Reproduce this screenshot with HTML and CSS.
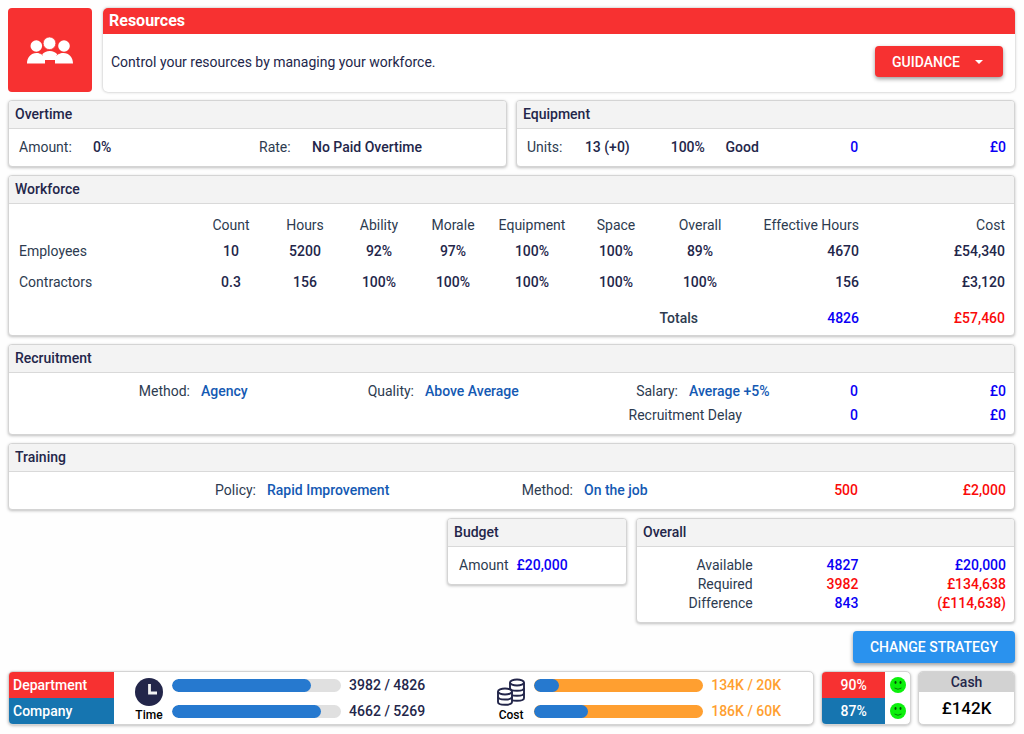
FILE: index.html
```
<!DOCTYPE html>
<html lang="en">
<head>
<meta charset="utf-8">
<meta name="viewport" content="width=device-width, initial-scale=1">
<title>Resources</title>
<link rel="stylesheet" href="styles.css">
</head>
<body>
<main class="page">
  <header class="top">
    <div class="tile">
      <svg class="tile-icon" viewBox="0 0 46 27" aria-hidden="true">
        <g fill="currentColor">
          <circle cx="9.300" cy="9" r="5.800"/>
          <circle cx="37" cy="9" r="5.800"/>
          <path d="M0 26.500C0 20.500 4 16 9.500 16c2.300 0 4 .5 5.500 1.500 2-2 4.500-3.500 7.800-3.500s5.700 1.500 7.700 3.500c1.500-1 3.500-1.500 6-1.500C42 16 46 20.500 46 26.500H28V23H18v3.500z"/>
        </g>
        <circle cx="22.500" cy="6.300" r="6.300" fill="currentColor" stroke="#f73131" stroke-width=".7"/>
        <path d="M12.500 16.200q2 .5 3.500 2.200M33 16.200q-2 .5-3.500 2.200" fill="none" stroke="#f73131" stroke-width=".6"/>
      </svg>
    </div>
    <section class="intro">
      <h1 class="intro-title">Resources</h1>
      <div class="intro-body">
        <p class="intro-text">Control your resources by managing your workforce.</p>
        <button class="btn btn-red" type="button">GUIDANCE <span class="caret"></span></button>
      </div>
    </section>
  </header>

  <div class="pair">
    <section class="panel">
      <h2 class="panel-title">Overtime</h2>
      <div class="row overtime">
        <span>Amount:</span><b>0%</b><span>Rate:</span><b>No Paid Overtime</b>
      </div>
    </section>
    <section class="panel">
      <h2 class="panel-title">Equipment</h2>
      <div class="row equipment">
        <span>Units:</span><b>13 (+0)</b><b>100%</b><b>Good</b><b class="num blue">0</b><b class="num blue">£0</b>
      </div>
    </section>
  </div>

  <section class="panel">
    <h2 class="panel-title">Workforce</h2>
    <table class="workforce">
      <colgroup><col class="c-name"><col class="c-s"><col class="c-s"><col class="c-s"><col class="c-s"><col class="c-m"><col class="c-m"><col class="c-m"><col class="c-hours"><col class="c-cost"></colgroup>
      <thead>
        <tr><td></td><th scope="col">Count</th><th scope="col">Hours</th><th scope="col">Ability</th><th scope="col">Morale</th><th scope="col">Equipment</th><th scope="col">Space</th><th scope="col">Overall</th><th scope="col" class="num">Effective Hours</th><th scope="col" class="num">Cost</th></tr>
      </thead>
      <tbody>
        <tr><th scope="row">Employees</th><td>10</td><td>5200</td><td>92%</td><td>97%</td><td>100%</td><td>100%</td><td>89%</td><td class="num">4670</td><td class="num">£54,340</td></tr>
        <tr class="tall"><th scope="row">Contractors</th><td>0.3</td><td>156</td><td>100%</td><td>100%</td><td>100%</td><td>100%</td><td>100%</td><td class="num">156</td><td class="num">£3,120</td></tr>
      </tbody>
      <tfoot>
        <tr class="tall"><td colspan="7"></td><th scope="row" class="totals">Totals</th><td class="num blue">4826</td><td class="num red">£57,460</td></tr>
      </tfoot>
    </table>
  </section>

  <section class="panel">
    <h2 class="panel-title">Recruitment</h2>
    <div class="row recruitment">
      <span class="num">Method:</span><a class="link" href="#method">Agency</a>
      <span class="num">Quality:</span><a class="link" href="#quality">Above Average</a>
      <span class="num">Salary:</span><a class="link span2" href="#salary">Average +5%</a>
      <b class="num blue">0</b><b class="num blue">£0</b>
      <span class="num delay">Recruitment Delay</span>
      <b class="num blue delay-hours">0</b><b class="num blue">£0</b>
    </div>
  </section>

  <section class="panel">
    <h2 class="panel-title">Training</h2>
    <div class="row training">
      <span class="num">Policy:</span><a class="link" href="#policy">Rapid Improvement</a>
      <span class="num">Method:</span><a class="link" href="#training">On the job</a>
      <b class="num red">500</b><b class="num red">£2,000</b>
    </div>
  </section>

  <div class="summary">
    <section class="panel">
      <h2 class="panel-title">Budget</h2>
      <div class="row budget"><span>Amount</span><b class="blue">£20,000</b></div>
    </section>
    <section class="panel">
      <h2 class="panel-title">Overall</h2>
      <div class="row overall">
        <span class="num">Available</span><b class="num blue">4827</b><b class="num blue">£20,000</b>
        <span class="num">Required</span><b class="num red">3982</b><b class="num red">£134,638</b>
        <span class="num">Difference</span><b class="num blue">843</b><b class="num red">(£114,638)</b>
      </div>
    </section>
  </div>

  <div class="actions"><button class="btn btn-blue" type="button">CHANGE STRATEGY</button></div>

  <footer class="status">
    <section class="card usage">
      <div class="scopes"><div class="bg-red">Department</div><div class="bg-blue">Company</div></div>
      <div class="metric">
        <svg class="icon" viewBox="0 0 28 28" aria-hidden="true"><circle cx="14" cy="14" r="14" fill="#23264a"/><path d="M14.500 6v9H22" fill="none" stroke="#f3f3f3" stroke-width="2.800"/></svg>
        <span>Time</span>
      </div>
      <div class="bars">
        <div class="bar"><div class="fill" style="width:82%"></div></div>
        <div class="bar"><div class="fill" style="width:88%"></div></div>
      </div>
      <div class="figures"><span>3982 / 4826</span><span>4662 / 5269</span></div>
      <div class="metric">
        <svg class="icon" viewBox="0 0 28 28" fill="#fff" stroke="#23264a" stroke-width="1.900" aria-hidden="true">
          <path d="M13 4.500v15.500c0 1.700 3 2.800 7 2.800s7-1.100 7-2.800V4.500"/>
          <path d="M13 10c0 1.700 3 2.800 7 2.800s7-1.100 7-2.800M13 15c0 1.700 3 2.800 7 2.800s7-1.100 7-2.800" fill="none"/>
          <ellipse cx="20" cy="4.500" rx="7" ry="3"/>
          <path d="M1 13.500v10.500c0 1.700 3 2.800 7 2.800s7-1.100 7-2.800V13.500"/>
          <path d="M1 18.700c0 1.700 3 2.800 7 2.800s7-1.100 7-2.800" fill="none"/>
          <ellipse cx="8" cy="13.500" rx="7" ry="3"/>
        </svg>
        <span>Cost</span>
      </div>
      <div class="bars">
        <div class="bar over"><div class="fill" style="width:15%"></div></div>
        <div class="bar over"><div class="fill" style="width:32%"></div></div>
      </div>
      <div class="figures orange"><span>134K / 20K</span><span>186K / 60K</span></div>
    </section>
    <section class="card mood">
      <div class="scopes rates"><div class="bg-red">90%</div><div class="bg-blue">87%</div></div>
      <div class="faces">
        <svg class="face" viewBox="0 0 16 16" aria-hidden="true"><circle cx="8" cy="8" r="8" fill="#0cf00c"/><ellipse cx="5.500" cy="5.500" rx="1" ry="1.400" fill="#064806"/><ellipse cx="10.500" cy="5.500" rx="1" ry="1.400" fill="#064806"/><path d="M4.500 11q3.500 2.500 7 0" fill="none" stroke="#087008" stroke-width=".9"/></svg>
        <svg class="face" viewBox="0 0 16 16" aria-hidden="true"><circle cx="8" cy="8" r="8" fill="#0cf00c"/><ellipse cx="5.500" cy="5.500" rx="1" ry="1.400" fill="#064806"/><ellipse cx="10.500" cy="5.500" rx="1" ry="1.400" fill="#064806"/><path d="M4.500 11q3.500 2.500 7 0" fill="none" stroke="#087008" stroke-width=".9"/></svg>
      </div>
    </section>
    <section class="card cash"><h2 class="cash-title">Cash</h2><div class="cash-value">£142K</div></section>
  </footer>
</main>
</body>
</html>
```
FILE: styles.css
```
* { box-sizing: border-box; }

body {
  margin: 0;
  background: #fefefe;
  color: #23264a;
  font: 400 14px/20px Roboto, "Liberation Sans", sans-serif;
}

h1, h2, p { margin: 0; }
b { font-weight: 500; }

.page {
  display: flex;
  flex-direction: column;
  gap: 8px;
  padding: 8px 9px 8px 8px;
}

.num { text-align: right; }
.row span, .workforce th { color: #2d3b50; }
.blue { color: #0a00f5; }
.red { color: #fa0a0a; }
.link { color: #1459b3; font-weight: 500; text-decoration: none; }

/* Top banner */
.top { display: flex; gap: 11px; }
.tile {
  display: grid;
  place-items: center;
  width: 84px;
  height: 84px;
  border-radius: 4px;
  background: #f73131;
  color: #fff;
}
.tile-icon { width: 46px; height: 27px; overflow: visible; }
.intro {
  flex: 1;
  display: flex;
  flex-direction: column;
  border-radius: 5px;
  overflow: hidden;
  background: #fff;
  box-shadow: 0 0 3px rgba(0, 0, 0, .3);
}
.intro-title {
  padding: 0 6px;
  background: #f73131;
  color: #fff;
  font-size: 16px;
  font-weight: 700;
  line-height: 26px;
}
.intro-body {
  flex: 1;
  display: flex;
  align-items: center;
  justify-content: space-between;
  padding: 0 12px 3px 8px;
}

.btn {
  display: inline-flex;
  align-items: center;
  justify-content: center;
  gap: 15px;
  height: 31px;
  border: 0;
  border-radius: 4px;
  padding: 0 17px;
  color: #fff;
  font: 500 14px/20px Roboto, "Liberation Sans", sans-serif;
  box-shadow: 0 2px 4px rgba(0, 0, 0, .4);
}
.btn-red { background: #f73131; }
.btn-blue { background: #2a92ee; height: 32px; }
.caret {
  margin-right: 3px;
  border: 4px solid transparent;
  border-top-color: #fff;
  border-bottom: 0;
}

/* Panels */
.panel {
  border: 1px solid #d4d4d4;
  border-radius: 4px;
  overflow: hidden;
  background: #fff;
  box-shadow: 0 1px 3px rgba(0, 0, 0, .25);
}
.panel-title {
  padding: 0 6px;
  border-bottom: 1px solid #d9d9d9;
  background: #f3f3f3;
  font-size: 14px;
  font-weight: 500;
  line-height: 27px;
}
.pair { display: grid; grid-template-columns: 1fr 1fr; gap: 9px; }
.row { display: grid; padding: 8px 8px 9px 10px; }
.overtime { grid-template-columns: 74fr 166fr 53fr 186fr; }
.equipment { grid-template-columns: 58fr 86fr 55fr 72fr 61fr 148fr; }

.workforce {
  width: 100%;
  margin-top: 8px;
  border-collapse: collapse;
  table-layout: fixed;
}
.c-name { width: 185px; }
.c-s { width: 74px; }
.c-m { width: 84px; }
.c-hours { width: 117px; }
.c-cost { width: 155px; }
.workforce th, .workforce td { height: 26px; padding: 0; text-align: center; }
.workforce .tall > * { height: 36px; }
.workforce tfoot .tall > * { height: 35px; }
.workforce th { font-weight: 400; }
.workforce td { font-weight: 500; }
.workforce tbody th { padding-left: 10px; text-align: left; }
.workforce .num { text-align: right; }
.workforce .num:last-child { padding-right: 9px; }
.workforce .totals { padding-right: 44px; text-align: right; font-weight: 500; }

.recruitment {
  grid-template-columns: 181fr 102fr 100fr 142fr 100fr 53fr 38fr 56fr 137fr;
  gap: 4px 11px;
  padding-left: 0;
}
.span2 { grid-column: span 2; }
.delay { grid-column: 5 / 7; }
.delay-hours { grid-column: 8; }
.training {
  grid-template-columns: 247fr 196fr 99fr 207fr 56fr 137fr;
  gap: 11px;
  padding-left: 0;
}

.summary {
  display: grid;
  grid-template-columns: 180fr 379fr;
  gap: 9px;
  align-items: start;
  width: 56.4%;
  margin-left: auto;
}
.budget { grid-template-columns: auto 1fr; gap: 8px; padding-left: 11px; }
.overall { grid-template-columns: 116fr 106fr 148fr; line-height: 19px; padding: 9px 8px 9px 0; }

.actions { display: flex; justify-content: flex-end; }

/* Status bar */
.status {
  display: grid;
  grid-template-columns: 807fr 90fr 97fr;
  gap: 7px;
  font-weight: 500;
}
.card {
  display: flex;
  height: 54px;
  border: 1px solid #d4d4d4;
  border-radius: 5px;
  overflow: hidden;
  background: #fff;
  box-shadow: 0 1px 3px rgba(0, 0, 0, .25);
}
.scopes {
  display: grid;
  grid-template-rows: 1fr 1fr;
  width: 105px;
  color: #fff;
  line-height: 26px;
}
.scopes > div { padding-left: 4px; }
.bg-red { background: #f73131; }
.bg-blue { background: #1675b0; }
.metric {
  display: flex;
  flex-direction: column;
  align-items: center;
  gap: 2px;
  width: 58px;
  padding: 6px 0 0 12px;
  color: #000;
  font-size: 12px;
  line-height: 14px;
}
.icon { width: 28px; height: 28px; }
.bars, .figures, .faces {
  display: flex;
  flex-direction: column;
  justify-content: space-around;
}
.bars { flex: 1; }
.bar { height: 13px; border-radius: 7px; overflow: hidden; background: #e0e0e0; }
.fill { height: 100%; border-radius: 7px; background: #2679cf; }
.over { background: #ff9f30; }
.figures { width: 135px; padding-left: 8px; }
.orange { width: 110px; color: #ff9f30; }
.rates { width: 63px; text-align: center; }
.rates > div { padding: 0; }
.faces { flex: 1; align-items: center; }
.face { width: 16px; height: 16px; }
.cash { flex-direction: column; text-align: center; }
.cash-title { background: #d2d2d2; font-size: 14px; font-weight: 500; line-height: 20px; }
.cash-value { color: #000; font-size: 17px; line-height: 32px; }
```
